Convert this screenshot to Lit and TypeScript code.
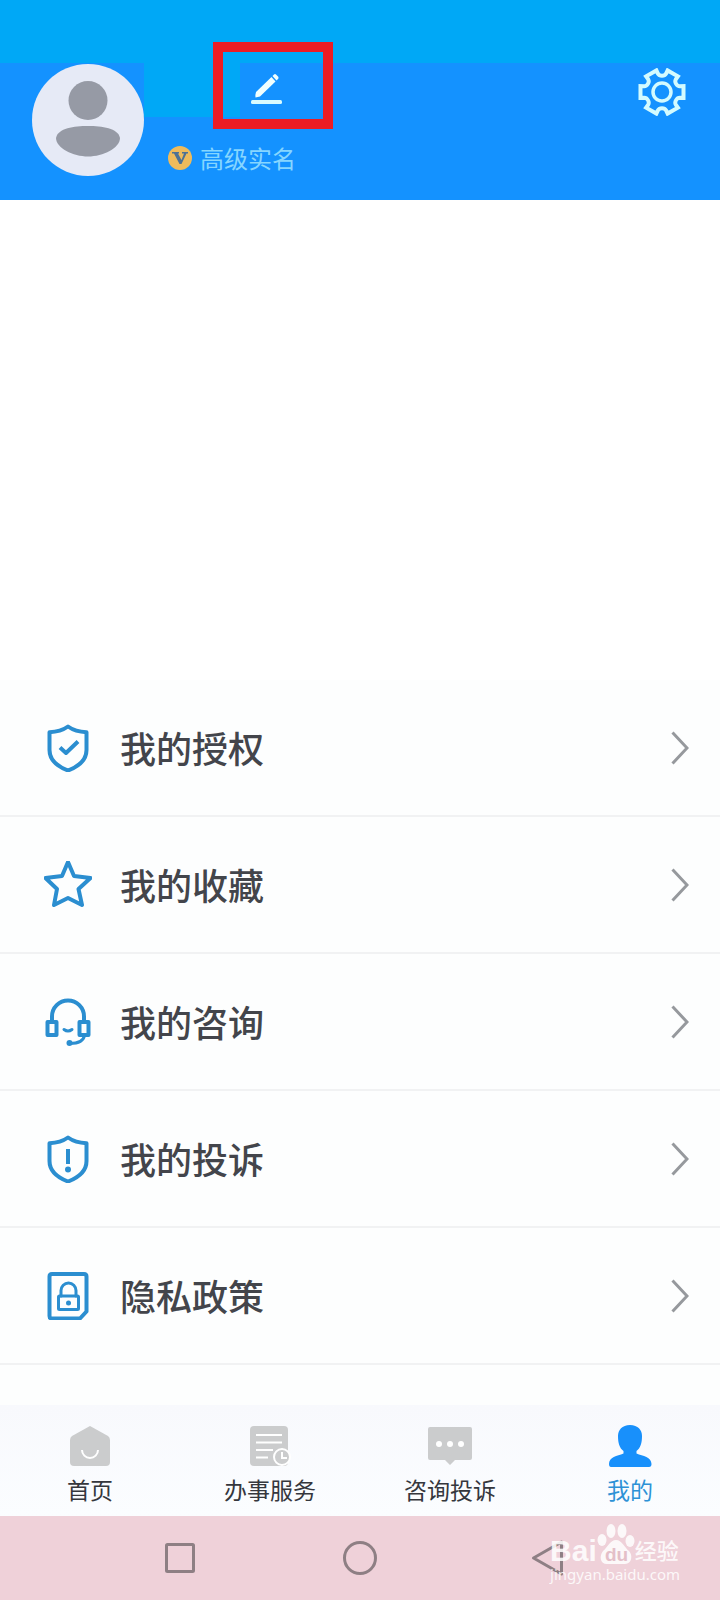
import { LitElement, html, css, svg } from "lit";
import { customElement, property } from "lit/decorators.js";

/** Outline of a six-toothed gear centred on 0,0. */
function gearOutline(): string {
  const turn = (x: number, y: number, deg: number): string => {
    const a = (deg * Math.PI) / 180;
    const px = x * Math.cos(a) - y * Math.sin(a);
    const py = x * Math.sin(a) + y * Math.cos(a);
    return `${px.toFixed(2)} ${py.toFixed(2)}`;
  };
  let d = "";
  for (let i = 0; i < 6; i++) {
    const r = i * 60;
    d += `${i === 0 ? "M" : "L"}${turn(-5.6, -21.6, r)}`;
    d += `L${turn(-4, -18.2, r)}C${turn(-2.5, -15.6, r)} ${turn(2.5, -15.6, r)} ${turn(4, -18.2, r)}L${turn(5.6, -21.6, r)}`;
  }
  return d + "Z";
}

const shield = svg`<path d="M24 2.5C18.5 6.5 12 8 5.5 8.2V26C5.5 36 13.5 42.5 24 46.5C34.5 42.5 42.5 36 42.5 26V8.2C36 8 29.5 6.5 24 2.5Z" />`;

const rowIcons: Record<string, unknown> = {
  authorize: svg`${shield}<path d="M16 23.500L22 29L34 17.500" stroke-linecap="butt" />`,
  favorite: svg`<path d="M24 1L30 15L46.500 17L34.500 28L38 44L24 37L10 44L13 28L1.500 17L18 15Z" />`,
  consult: svg`<path d="M8 24V18.500A16 16 0 0 1 40 18.500V24" /><rect x="3.500" y="24" width="9" height="13" /><rect x="35.500" y="24" width="9" height="13" /><path d="M20 31.500Q24 34.500 28 31.500" stroke-width="3" /><path d="M40.500 37.500Q39 45.500 26 45.500" stroke-width="3" /><circle cx="25.500" cy="45" r="3" fill="currentColor" stroke="none" />`,
  complain: svg`${shield}<path d="M24 14V29" stroke-linecap="butt" /><circle cx="24" cy="34.500" r="3" fill="currentColor" stroke="none" />`,
  privacy: svg`<path d="M8 2H40Q42.500 2 42.500 4.500V39.500L36 46.500H8Q5.500 46.500 5.500 44V4.500Q5.500 2 8 2Z" /><path d="M17 24V18.500A7.500 7.500 0 0 1 32 18.500V24" stroke-width="3" /><rect x="14.500" y="24" width="20" height="13.500" rx="1" stroke-width="3" /><circle cx="24.500" cy="31" r="2.500" fill="currentColor" stroke="none" />`,
};

const tabIcons: Record<string, unknown> = {
  home: svg`<path d="M22 2L40 12Q42 13.500 42 16V38Q42 42 38 42H6Q2 42 2 38V16Q2 13.500 4 12Z" fill="#cbcccd" /><path d="M14 26A8 8 0 0 0 30 26" fill="none" stroke="#fff" stroke-width="2" />`,
  service: svg`<rect x="2" y="2" width="38" height="40" rx="4" fill="#cbcccd" /><path d="M8 11H34M8 18.500H34M8 26H25M8 33.500H20" stroke="#fff" stroke-width="2" /><circle cx="34" cy="33" r="8" fill="#cbcccd" stroke="#fff" stroke-width="2" /><path d="M34 28V34H39" fill="none" stroke="#fff" stroke-width="2" />`,
  complaint: svg`<path d="M2 3H42Q44 3 44 5V34Q44 36 42 36H27L22 41L17 36H2Q0 36 0 34V5Q0 3 2 3Z" fill="#cbcccd" /><circle cx="11" cy="20" r="3" fill="#fff" /><circle cx="22" cy="20" r="3" fill="#fff" /><circle cx="33" cy="20" r="3" fill="#fff" />`,
  mine: svg`<path d="M22 1C30 1 34 6 34 12C34 19 32.500 24 28.500 27V29.500C35 32 43.500 33 43.500 40Q43.500 43 41 43H3Q1 43 1 40C1 33 9 32 15.500 29.500V27C11.500 24 10 19 10 12C10 6 14 1 22 1Z" fill="#1890fb" />`,
};

@customElement("menu-row")
class MenuRow extends LitElement {
  @property() icon = "";
  @property() label = "";

  static styles = css`
    :host {
      display: block;
      border-bottom: 2px solid #f1f2f3;
    }
    .row {
      display: flex;
      align-items: center;
      height: 135px;
      padding: 0 31px 0 44px;
      color: #43454b;
      text-decoration: none;
      font-size: 36px;
      font-weight: 500;
      line-height: 48px;
    }
    .icon {
      width: 48px;
      height: 48px;
      margin-right: 28px;
      color: #2b8ed0;
      fill: none;
      stroke: currentColor;
      stroke-width: 4;
      stroke-linejoin: round;
      stroke-linecap: round;
    }
    .label {
      flex: 1;
      padding-bottom: 2px;
    }
    .chevron {
      width: 18px;
      height: 34px;
      fill: none;
      stroke: #96999d;
      stroke-width: 3;
    }
  `;

  render() {
    return html`<a class="row" href="#${this.icon}">
      <svg class="icon" viewBox="0 0 48 48" aria-hidden="true">${rowIcons[this.icon]}</svg>
      <span class="label">${this.label}</span>
      <svg class="chevron" viewBox="0 0 18 34" aria-hidden="true"><path d="M1.500 1.500L16 17L1.500 32.500" /></svg>
    </a>`;
  }
}

@customElement("app-root")
class AppRoot extends LitElement {
  private rows = [
    { icon: "authorize", label: "我的授权" },
    { icon: "favorite", label: "我的收藏" },
    { icon: "consult", label: "我的咨询" },
    { icon: "complain", label: "我的投诉" },
    { icon: "privacy", label: "隐私政策" },
  ];

  private tabs = [
    { icon: "home", label: "首页" },
    { icon: "service", label: "办事服务" },
    { icon: "complaint", label: "咨询投诉" },
    { icon: "mine", label: "我的", active: true },
  ];

  static styles = css`
    :host {
      display: flex;
      flex-direction: column;
      min-height: 100vh;
      background: #fdfefe;
      font-family: "Noto Sans CJK SC", "Noto Sans", sans-serif;
    }
    button {
      display: flex;
      align-items: center;
      justify-content: center;
      padding: 0;
      border: 0;
      background: none;
      cursor: pointer;
    }
    .status {
      height: 63px;
      background: #00a8f6;
    }
    .header {
      display: flex;
      align-items: flex-start;
      height: 137px;
      background: #1492ff;
    }
    .avatar {
      width: 112px;
      height: 112px;
      margin: 1px 0 0 32px;
    }
    .profile {
      flex: 1;
    }
    .name-line {
      display: flex;
    }
    .name {
      width: 96px;
      height: 54px;
      background: #00a8f6;
    }
    .edit {
      position: relative;
      width: 54px;
      height: 54px;
    }
    .edit-icon {
      width: 32px;
      height: 32px;
    }
    .highlight {
      position: absolute;
      left: -27px;
      top: -21px;
      box-sizing: border-box;
      width: 120px;
      height: 87px;
      border: 10px solid #ec1c24;
    }
    .verified {
      display: flex;
      align-items: center;
      gap: 8px;
      margin-top: 24px;
      padding-left: 24px;
      color: #86d6ff;
      font-size: 24px;
      line-height: 34px;
    }
    .badge {
      width: 24px;
      height: 24px;
    }
    .settings {
      width: 48px;
      height: 48px;
      margin: 5px 34px 0 0;
    }
    .blank {
      flex: 1;
      background: #fff;
    }
    .menu {
      padding-bottom: 40px;
    }
    .tabs {
      display: grid;
      grid-template-columns: repeat(4, 1fr);
      height: 111px;
      background: linear-gradient(#f8f9fd, #fbfdff);
    }
    .tab {
      display: flex;
      flex-direction: column;
      align-items: center;
      gap: 5px;
      padding-top: 19px;
      color: #35373d;
      font-size: 23px;
      line-height: 32px;
      text-decoration: none;
    }
    .tab.active {
      color: #2d92d6;
    }
    .tab-icon {
      width: 44px;
      height: 44px;
    }
    .system {
      position: relative;
      display: grid;
      grid-template-columns: repeat(3, 1fr);
      height: 84px;
      padding: 0 12.5%;
      background: #efd1d9;
    }
    .system-icon {
      width: 40px;
      height: 40px;
      overflow: visible;
      fill: none;
      stroke: #8e7f84;
      stroke-width: 3;
      stroke-linejoin: round;
    }
    .watermark {
      position: absolute;
      right: 40px;
      bottom: 16px;
      color: #fff;
      opacity: 0.85;
      pointer-events: none;
    }
    .brand {
      display: flex;
      align-items: flex-end;
      height: 42px;
    }
    .brand-latin {
      font: bold 30px/28px "Liberation Sans", sans-serif;
    }
    .brand-cjk {
      font-size: 22px;
      font-weight: 500;
      line-height: 32px;
    }
    .paw {
      width: 38px;
      height: 42px;
    }
    .paw-text {
      font: bold 19px "Liberation Sans", sans-serif;
      fill: #e3bcc6;
    }
    .site {
      font: 15px/19px "Noto Sans", sans-serif;
    }
  `;

  render() {
    return html`
      <div class="status"></div>
      <header class="header">
        <svg class="avatar" viewBox="0 0 112 112" role="img" aria-label="头像">
          <circle cx="56" cy="56" r="56" fill="#e6eaf6" />
          <circle cx="56" cy="36.500" r="19.500" fill="#969aa5" />
          <path d="M24 74C26 64 42 62 56 62C70 62 86 64 88 74C88 84 71 92.500 56 92.500C41 92.500 24 84 24 74Z" fill="#969aa5" />
        </svg>
        <div class="profile">
          <div class="name-line">
            <div class="name"></div>
            <button class="edit" aria-label="编辑">
              <svg class="edit-icon" viewBox="0 0 32 32" fill="#f0ffff">
                <path d="M20.500 3L24.500 7.500L9 22.500L4.500 23.500Q4 21 5 18Z" />
                <path d="M21.500 2L23 0.500Q24 -0.500 25 0.500L27 2.500Q28 3.500 27 5L25.500 6.500Z" />
                <rect x="0" y="26" width="31" height="4" rx="1.500" fill="#d9fbff" />
              </svg>
              <span class="highlight"></span>
            </button>
          </div>
          <div class="verified">
            <svg class="badge" viewBox="0 0 24 24" aria-hidden="true">
              <circle cx="12" cy="12" r="12" fill="#eebb5c" />
              <path d="M4 6H11V7.500H10L13.500 14L16 7.500H14V6H20V7.500H18.500L13.500 18H11.500L6 7.500H4Z" fill="#4d7195" />
            </svg>
            <span>高级实名</span>
          </div>
        </div>
        <button class="settings" aria-label="设置">
          <svg width="48" height="48" viewBox="-24 -24 48 48" fill="none" stroke="#d3fbff" stroke-width="4">
            <path d=${gearOutline()} />
            <circle r="9" stroke-width="3.500" />
          </svg>
        </button>
      </header>
      <div class="blank"></div>
      <nav class="menu">
        ${this.rows.map((r) => html`<menu-row .icon=${r.icon} .label=${r.label}></menu-row>`)}
      </nav>
      <nav class="tabs">
        ${this.tabs.map(
          (t) => html`<a class="tab ${t.active ? "active" : ""}" href="#${t.icon}">
            <svg class="tab-icon" viewBox="0 0 44 44" aria-hidden="true">${tabIcons[t.icon]}</svg>
            <span>${t.label}</span>
          </a>`
        )}
      </nav>
      <footer class="system">
        <button aria-label="最近任务">
          <svg class="system-icon" viewBox="0 0 40 40"><rect x="6.500" y="6.500" width="27" height="27" rx="1" /></svg>
        </button>
        <button aria-label="主屏幕">
          <svg class="system-icon" viewBox="0 0 40 40"><circle cx="20" cy="20" r="15.500" /></svg>
        </button>
        <button aria-label="返回">
          <svg class="system-icon" viewBox="0 0 40 40"><path d="M13.500 20L41.500 4V36Z" /></svg>
        </button>
        <div class="watermark">
          <div class="brand">
            <span class="brand-latin">Bai</span>
            <svg class="paw" viewBox="0 0 38 42">
              <g fill="#fff">
                <ellipse cx="5" cy="17" rx="4.500" ry="6" />
                <ellipse cx="14" cy="8" rx="4.500" ry="7" />
                <ellipse cx="25" cy="8" rx="4.500" ry="7" />
                <ellipse cx="33" cy="18" rx="4.500" ry="6" />
                <path d="M19 17C25 17 27 24 32 28C36 32 35 41 28 41H10C3 41 2 33 6 28C11 24 13 17 19 17Z" />
              </g>
              <text class="paw-text" x="8" y="38">du</text>
            </svg>
            <span class="brand-cjk">经验</span>
          </div>
          <div class="site">jingyan.baidu.com</div>
        </div>
      </footer>
    `;
  }
}
